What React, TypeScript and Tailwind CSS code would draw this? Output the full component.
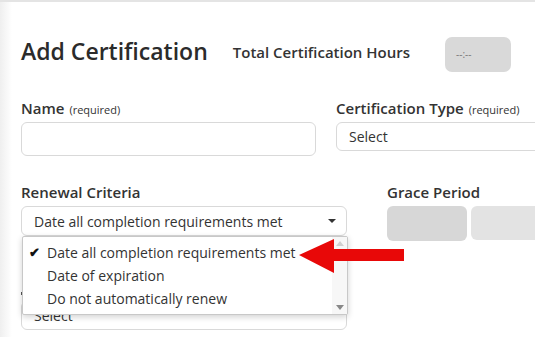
import React from "react";

function Label({ text, note }: { text: string; note?: string }) {
  return (
    <div className="h-[20px] leading-[20px] text-[15px] font-semibold text-[#333] whitespace-nowrap">
      {text}
      {note ? <span className="ml-[5px] text-[11px] font-normal">{note}</span> : null}
    </div>
  );
}

function Caret() {
  return (
    <svg width="8" height="4" viewBox="0 0 8 4" className="shrink-0">
      <polygon points="0,0 8,0 4,4" fill="#333" />
    </svg>
  );
}

export default function App() {
  return (
    <div className="relative w-[535px] h-[337px] overflow-hidden bg-white border-t-2 border-[#e4e4e4] font-['Open_Sans',sans-serif] text-[#333]">
      <div className="absolute left-0 top-0 bottom-0 w-[12px] bg-gradient-to-r from-[#efefef] to-white" />

      <div className="relative pl-[21px] pt-[33px]">
        {/* header */}
        <div className="flex items-start h-[37px]">
          <h1 className="mt-[1px] text-[23px] leading-[30px] font-semibold text-[#2b2b2b] whitespace-nowrap">
            Add Certification
          </h1>
          <div className="ml-[25px] mt-[7px] text-[15px] leading-[20px] font-semibold whitespace-nowrap">
            Total Certification Hours
          </div>
          <div className="ml-[35px] mt-[2px] w-[66px] h-[35px] shrink-0 rounded-[7px] bg-[#d9d9d9] flex items-center pl-[11px] text-[10px] text-[#777]">
            --:--
          </div>
        </div>

        {/* name + type */}
        <div className="flex mt-[26px]">
          <div className="w-[295px] shrink-0">
            <Label text="Name" note="(required)" />
            <div className="mt-[4px] h-[34px] rounded-[6px] border border-[#d9d9d9] bg-white" />
          </div>
          <div className="ml-[20px] w-[230px] shrink-0">
            <Label text="Certification Type" note="(required)" />
            <div className="mt-[4px] h-[29px] rounded-[6px] border border-[#d9d9d9] bg-white flex items-center pl-[12px] text-[14px]">
              Select
            </div>
          </div>
        </div>

        {/* renewal + grace */}
        <div className="flex mt-[26px]">
          <div className="w-[326px] shrink-0">
            <Label text="Renewal Criteria" />
            <div className="mt-[4px] h-[30px] rounded-[6px] border border-[#d9d9d9] bg-white flex items-center justify-between pl-[12px] pr-[10px] text-[14px]">
              <span className="whitespace-nowrap">Date all completion requirements met</span>
              <Caret />
            </div>
          </div>
          <div className="ml-[40px] shrink-0">
            <Label text="Grace Period" />
            <div className="mt-[4px] flex gap-[4px]">
              <div className="w-[80px] h-[35px] rounded-[6px] bg-[#d7d7d7]" />
              <div className="w-[80px] h-[34px] rounded-[6px] bg-[#e3e3e3]" />
            </div>
          </div>
        </div>

        {/* next field, mostly hidden behind the open list */}
        <div className="w-[326px] mt-[39px]">
          <div className="h-[20px] flex items-center">
            <span className="w-[3px] h-[3px] mt-[6px] bg-[#555]" />
          </div>
          <div className="mt-[1px] h-[29px] rounded-[6px] border border-[#d9d9d9] bg-white flex items-center pl-[12px] text-[14px]">
            Select
          </div>
        </div>
      </div>

      {/* open dropdown list */}
      <div className="absolute left-[22px] top-[234px] w-[326px] h-[79px] bg-white border border-[#c8c8c8] rounded-[2px] shadow-[0_2px_6px_rgba(0,0,0,0.18)] flex">
        <div className="flex-1 pt-[4px] text-[14px] leading-[23px]">
          <div className="flex items-center">
            <span className="w-[24px] pl-[6px] text-[13px] font-bold text-[#111]">✔</span>
            <span className="whitespace-nowrap">Date all completion requirements met</span>
          </div>
          <div className="pl-[24px]">Date of expiration</div>
          <div className="pl-[24px]">Do not automatically renew</div>
        </div>
        <div className="w-[15px] bg-[#f7f7f7] flex flex-col items-center justify-between py-[4px]">
          <svg width="8" height="5" viewBox="0 0 8 5">
            <polygon points="4,0 8,5 0,5" fill="#d0d0d0" />
          </svg>
          <svg width="8" height="5" viewBox="0 0 8 5">
            <polygon points="0,0 8,0 4,5" fill="#888" />
          </svg>
        </div>
      </div>

      {/* annotation arrow */}
      <svg className="absolute left-0 top-0" width="535" height="337" viewBox="0 0 535 337">
        <polygon
          points="299,253 334,237 334,247 404,247 404,259 334,259 334,271"
          fill="#e80808"
        />
      </svg>
    </div>
  );
}
